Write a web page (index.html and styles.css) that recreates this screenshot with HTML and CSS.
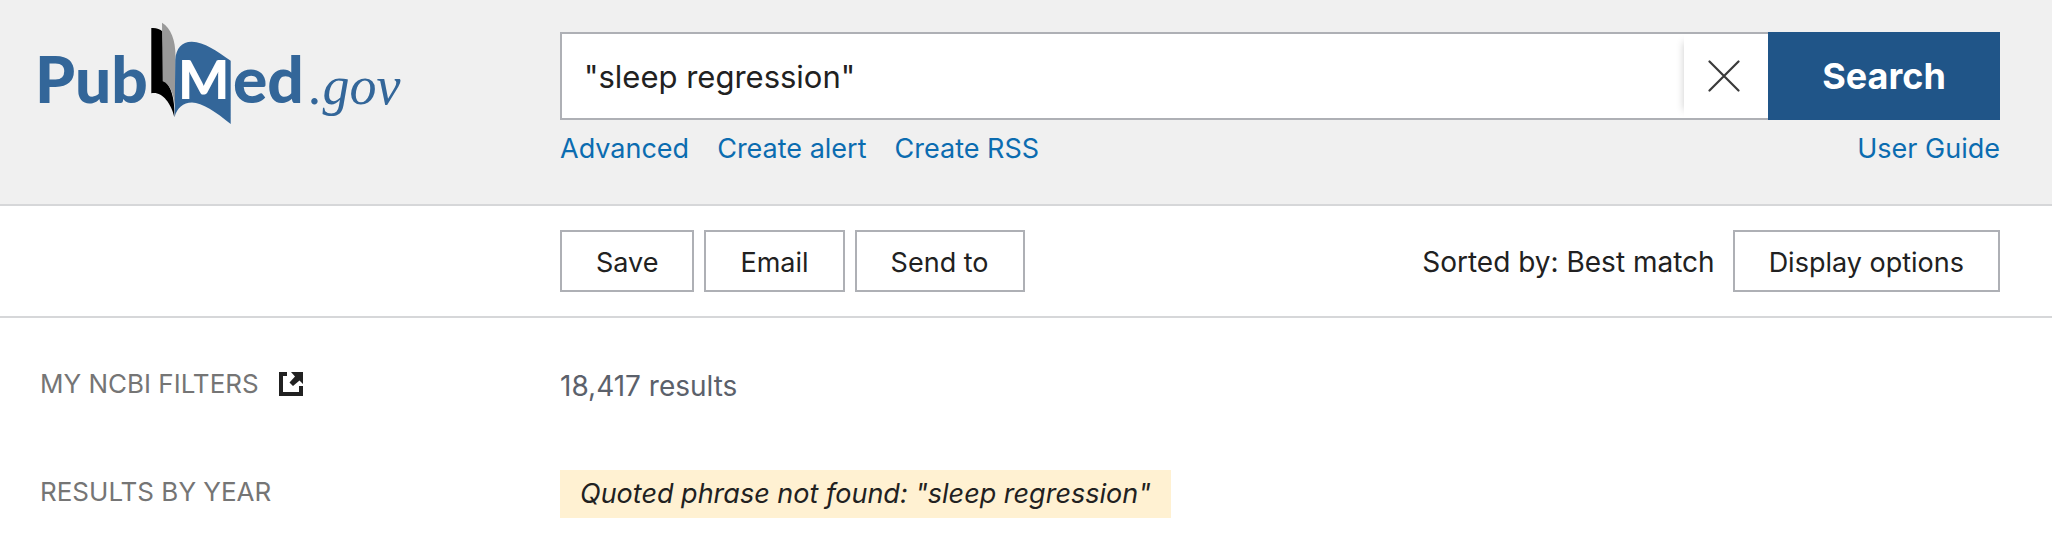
FILE: index.html
```html
<!DOCTYPE html>
<html lang="en">
<head>
    <meta charset="UTF-8">
    <meta name="viewport" content="width=device-width, initial-scale=1.0">
    <title>"sleep regression" - Search Results - PubMed</title>
    <link rel="stylesheet" href="styles.css">
</head>

<body>
    <header class="header">
        <a href="#" class="logo" aria-label="PubMed.gov home">
            <svg width="364" height="108" viewBox="0 0 364 108">
                <!-- book -->
                <path fill="#000" d="M111.300 8C116 7.500 120 9 122.500 11.500L124 60C131 66 135 78 134.300 97C131 82 121 71 111.300 73.300Z"/>
                <path fill="#999" d="M122 2.700C131 8 135.500 20 135.500 36V90C134 74 130 64 122.700 61.300Z"/>
                <path fill="#336699" d="M135.300 40C136 28 142 21.500 152 21.700C164 22 177 31 190.700 40.700V104C176 92 162 82.500 152 82.500C143 82.500 137 88 134.600 97Z"/>
                <text class="logo-bold" x="-5" y="83">Pub</text>
                <text class="logo-m" x="138" y="79">M</text>
                <text class="logo-bold" x="193" y="83">ed</text>
                <text class="logo-gov" x="269" y="84">.gov</text>
            </svg>
        </a>
        <form class="search">
            <div class="search-row">
                <input type="text" class="search-input" aria-label="Search term" value="&quot;sleep regression&quot;">
                <button type="reset" class="clear" aria-label="Clear search">
                    <svg width="32" height="32" viewBox="0 0 32 32">
                        <path d="M1.500 1.500L30.500 30.500M30.500 1.500L1.500 30.500" stroke="#3a3a3a" stroke-width="2.200" stroke-linecap="round"/>
                    </svg>
                </button>
                <button type="submit" class="search-btn">Search</button>
            </div>
            <nav class="links">
                <a href="#">Advanced</a>
                <a href="#">Create alert</a>
                <a href="#">Create RSS</a>
                <a href="#" class="guide">User Guide</a>
            </nav>
        </form>
    </header>

    <div class="toolbar">
        <button type="button" class="btn">Save</button>
        <button type="button" class="btn">Email</button>
        <button type="button" class="btn">Send to</button>
        <span class="sorted">Sorted by: Best match</span>
        <button type="button" class="btn">Display options</button>
    </div>

    <main class="container">
        <aside class="filters">
            <h3>MY NCBI FILTERS
                <a href="#" aria-label="Open My NCBI filters">
                    <svg width="24" height="24" viewBox="0 0 24 24" fill="#212121">
                        <path d="M0 0H8V4H4V20H20V14H24V24H0Z"/>
                        <path d="M12 0H24V12L20.500 8.500L14 14L10.500 10.500L16 4.500Z"/>
                    </svg>
                </a>
            </h3>
            <h3>RESULTS BY YEAR</h3>
        </aside>
        <section class="results">
            <p class="amount">18,417 results</p>
            <p class="notice">Quoted phrase not found: "sleep regression"</p>
        </section>
    </main>
</body>
</html>
```
FILE: styles.css
```css
*{
    box-sizing: border-box;
    margin: 0;
}
body{
    background: #fff;
    color: #212121;
    font-family: Inter, "Liberation Sans", sans-serif;
    font-size: 27px;
    line-height: 32px;
}
button, input{
    font-family: inherit;
    font-size: inherit;
    color: inherit;
}
.header{
    display: grid;
    grid-template-columns: 520px 1fr;
    height: 206px;
    padding: 0 52px 0 40px;
    background: #f0f0f0;
    border-bottom: 2px solid #d6d7d9;
}
.logo{
    padding-top: 20px;
}
.logo svg{
    display: block;
    overflow: visible;
}
.logo-bold{
    font: 900 64px Lato, sans-serif;
    fill: #336699;
}
.logo-m{
    font: 900 54px Lato, sans-serif;
    fill: #fff;
}
.logo-gov{
    font: italic 54px "Liberation Serif", serif;
    fill: #336699;
}
.search{
    padding-top: 32px;
}
.search-row{
    display: flex;
    height: 88px;
}
.search-input{
    flex: 1;
    min-width: 0;
    padding: 0 22px;
    border: 2px solid #aeb0b5;
    border-right: 0;
    border-radius: 0;
    background: #fff;
    font-size: 31px;
}
.clear{
    width: 84px;
    padding: 0 4px 0 0;
    border: solid #aeb0b5;
    border-width: 2px 0;
    background: #fff;
    box-shadow: -10px 0 8px -10px rgba(0, 0, 0, 0.2);
}
.clear svg{
    display: block;
    margin: 0 auto;
}
.search-btn{
    width: 232px;
    border: 0;
    background: #205588;
    color: #fff;
    font-size: 36px;
    font-weight: bold;
}
.links{
    display: flex;
    gap: 28px;
    margin-top: 13px;
}
.links a{
    color: #0b6cb0;
    text-decoration: none;
}
.links .guide{
    margin-left: auto;
}
.toolbar{
    display: flex;
    align-items: center;
    gap: 10px;
    height: 112px;
    padding: 0 52px 0 560px;
    border-bottom: 2px solid #d6d7d9;
}
.btn{
    height: 62px;
    padding: 2px 34px 0;
    border: 2px solid #aeb0b5;
    background: #fff;
}
.sorted{
    margin-left: auto;
    margin-right: 8px;
    padding-top: 2px;
    font-size: 28px;
}
.container{
    display: grid;
    grid-template-columns: 520px 1fr;
    padding: 50px 52px 28px 40px;
}
.filters h3{
    display: flex;
    align-items: center;
    gap: 20px;
    height: 32px;
    margin-bottom: 76px;
    color: #757575;
    font-size: 26px;
    font-weight: normal;
}
.filters h3:last-child{
    margin-bottom: 0;
}
.filters svg{
    display: block;
}
.amount{
    margin: 2px 0 68px;
    color: #5b616b;
    font-size: 28px;
}
.notice{
    width: fit-content;
    padding: 8px 20px;
    background: #fff1d2;
    font-style: italic;
}
```
